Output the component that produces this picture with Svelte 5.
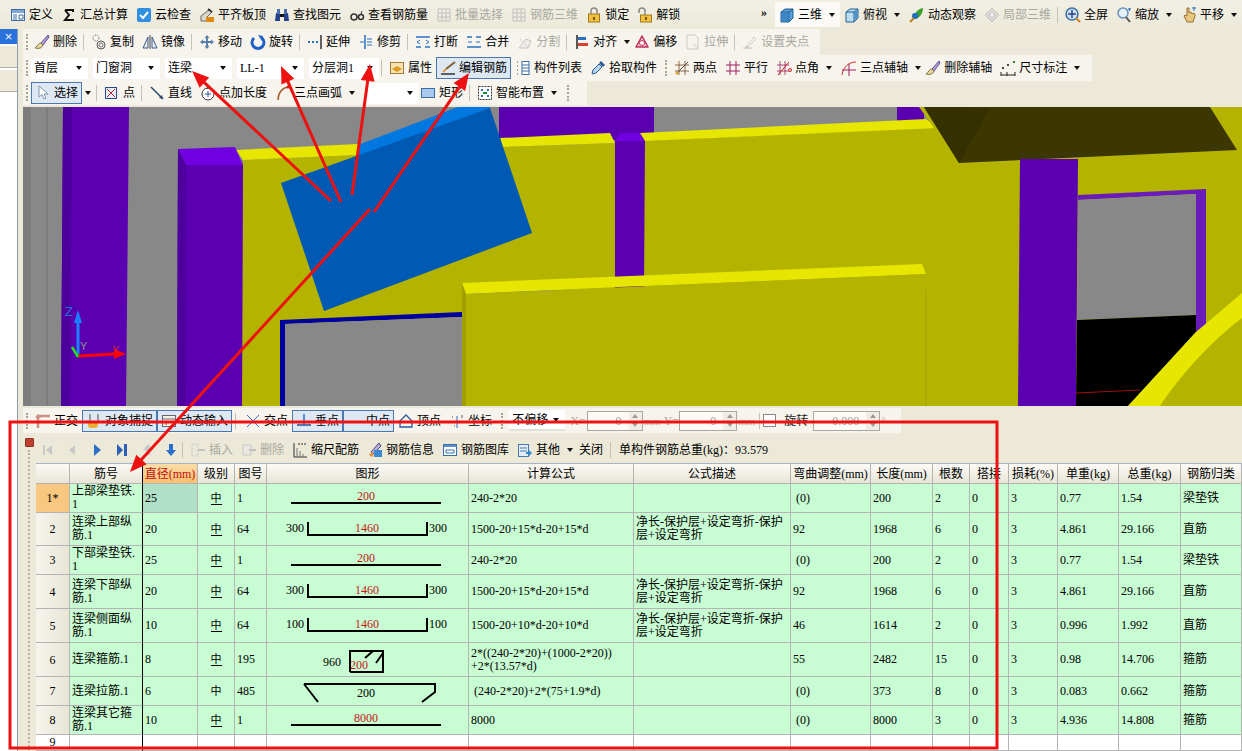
<script>
  // small 16x16 toolbar icons
  const I = {
    def: '<rect x="1.5" y="2.5" width="13" height="11" fill="#fff" stroke="#3a6ea5"/><rect x="2" y="3" width="12" height="3" fill="#7fa8d8"/><path d="M3 8h4M3 10h4M3 12h4M9 8h4v4H9z" stroke="#3a6ea5" fill="none"/>',
    sum: '<path d="M4 3h8v2M12 12v1H4l4-5-4-5" fill="none" stroke="#111" stroke-width="2"/>',
    cloud: '<rect x="1" y="1" width="14" height="14" rx="2" fill="#2f8fe0"/><path d="M4 8l3 3 5-6" fill="none" stroke="#fff" stroke-width="2"/>',
    level: '<path d="M2 14V9l8-6 3 2-5 5v4z" fill="#d9d9d0" stroke="#666"/><rect x="7" y="10" width="8" height="5" fill="#e08a10"/><path d="M9 2l4 3" stroke="#333" stroke-width="2"/>',
    find: '<path d="M2 6h4v8H1zM10 6h4l1 8h-5z" fill="#27408b"/><rect x="3" y="2" width="3" height="5" fill="#4a6ab0"/><rect x="10" y="2" width="3" height="5" fill="#4a6ab0"/><rect x="6" y="7" width="4" height="3" fill="#111"/>',
    glass: '<circle cx="5" cy="10" r="3" fill="none" stroke="#333" stroke-width="1.5"/><circle cx="12" cy="10" r="2.5" fill="none" stroke="#333" stroke-width="1.5"/><path d="M8 10h1.5M12 7l1-3" stroke="#333"/>',
    batch: '<path d="M2 2h12v12H2zM2 6h12M2 10h12M6 2v12M10 2v12" fill="none" stroke="#bbb"/>',
    lock: '<rect x="2.5" y="7" width="11" height="8" fill="#f0c040" stroke="#a07810"/><path d="M5 7V4a3 3 0 0 1 6 0v3" fill="none" stroke="#888" stroke-width="1.5"/><rect x="7" y="10" width="2" height="3" fill="#805000"/>',
    unlock: '<rect x="3.5" y="8" width="11" height="7" fill="#f0c040" stroke="#a07810"/><path d="M2 6V4a3 3 0 0 1 6 0v4" fill="none" stroke="#888" stroke-width="1.5"/><rect x="8" y="10" width="2" height="3" fill="#805000"/>',
    cube: '<path d="M2 5l4-3h8v9l-4 4H2z" fill="#5aa0d8" stroke="#1f5f90"/><path d="M2 5h8v10M10 5l4-3" fill="none" stroke="#1f5f90"/><path d="M2.5 5.500h7v9h-7z" fill="#3c86c4"/>',
    top: '<path d="M2 5l4-3h8v9l-4 4H2z" fill="#bcdcf0" stroke="#1f5f90"/><path d="M2 5h8v10M10 5l4-3" fill="none" stroke="#1f5f90"/><path d="M10.500 5.500l3-3v8l-3 3z" fill="#4a90c8"/>',
    orbit: '<path d="M3 14C4 8 8 2 14 1c0 6-4 11-9 11z" fill="#3aa030"/><circle cx="6" cy="9" r="3" fill="#1e6ec0"/><path d="M1 15l4-4" stroke="#c08020" stroke-width="2"/>',
    local: '<path d="M8 1l7 7-7 7-7-7z" fill="#d8d8d0" stroke="#bbb"/><path d="M5 8l3-3 3 3-3 3z" fill="#eee" stroke="#bbb"/>',
    full: '<circle cx="7" cy="7" r="6" fill="#cfe3f6" stroke="#3a6ea5" stroke-width="1.500"/><path d="M7 3v8M3 7h8" stroke="#27408b" stroke-width="1.500"/><path d="M11 11l4 4" stroke="#d08020" stroke-width="2"/>',
    zoom: '<circle cx="7" cy="6" r="5" fill="#e4f0fa" stroke="#6a90b8" stroke-width="1.500"/><path d="M10 10l4 5" stroke="#555" stroke-width="2"/><path d="M12 2h3M13.500 1v3" stroke="#2a70c0"/>',
    pan: '<path d="M3 9l3 6h6l2-6V7l-2-1-1 1V6l-2-1-1 1V1H6v8L4 8z" fill="#e8c880" stroke="#9a7030"/><path d="M11 1h4M13 0v4" stroke="#2a70c0"/>',
    brush: '<path d="M14 1L7 9l2 2 6-8z" fill="#b0a0d8" stroke="#604890"/><path d="M7 9c-3 0-3 3-6 5 4 1 7 0 8-3z" fill="#e8d8a0" stroke="#807040"/>',
    copy: '<circle cx="5" cy="4" r="3" fill="none" stroke="#777" stroke-dasharray="1.500 1"/><circle cx="10" cy="11" r="4" fill="none" stroke="#555"/><circle cx="10" cy="11" r="2" fill="none" stroke="#777"/>',
    mirror: '<path d="M8 1v14" stroke="#444"/><path d="M6 3v11H1zM10 3v11h5z" fill="#e8eef4" stroke="#3a5a88"/>',
    move: '<path d="M8 1l2.500 3H9v3h3V5.500L15 8l-3 2.500V9H9v3h1.500L8 15l-2.500-3H7V9H4v1.500L1 8l3-2.500V7h3V4H5.500z" fill="#5a80a8"/>',
    rotate: '<path d="M4 4a6 6 0 1 0 8 0" fill="none" stroke="#2060c8" stroke-width="3"/><path d="M8 1l5 1-1 5z" fill="#2060c8"/>',
    extend: '<path d="M1 8h2M5 8h2M9 8h2" stroke="#2a70c0" stroke-width="2"/><path d="M14 1v14" stroke="#333" stroke-width="1.500"/>',
    trim: '<path d="M7 1v14" stroke="#2a70c0" stroke-width="1.500"/><path d="M9 5h5M9 8h5M9 11h5M2 8h4" stroke="#2a70c0"/>',
    cut: '<path d="M1 13h5M10 13h5M1 3h14" stroke="#2a70c0" stroke-width="1.500"/><path d="M5 6L2 8l3 2M11 6l3 2-3 2" fill="none" stroke="#2a70c0"/>',
    merge: '<path d="M1 13h14M1 3h5M10 3h5" stroke="#2a70c0" stroke-width="1.500"/><path d="M2 8h4M10 8h4" stroke="#2a70c0"/>',
    split: '<path d="M2 14L9 5l5 2-3 7z" fill="#eee" stroke="#bbb"/><path d="M3 5l9 9" stroke="#ccc"/>',
    align: '<path d="M3 1v14" stroke="#222" stroke-width="1.500"/><path d="M4 3h8v3H4z" fill="#2a70c0"/><path d="M4 9h10v3H4z" fill="#d84030"/>',
    offset: '<path d="M2 13L8 2l6 11z" fill="#f8c8c8" stroke="#c03060" stroke-linejoin="round" stroke-width="1.500"/><circle cx="8" cy="9" r="2.500" fill="#fff" stroke="#c03060"/>',
    stretch: '<path d="M2 1h8l3 3v11H2z" fill="none" stroke="#c4c4c4"/><path d="M8 10l5 4" stroke="#ccc"/>',
    grip: '<path d="M3 14L12 3l2 2-8 8z" fill="none" stroke="#c8c8c8"/><path d="M1 14h3M7 14h3" stroke="#bbb"/><rect x="4.500" y="12" width="2" height="3" fill="#bbb"/>',
    attr: '<rect x="1.500" y="2.500" width="13" height="11" fill="#f4e2b0" stroke="#a07830"/><path d="M3 9l5-3 5 3-5 3z" fill="#e09a20"/>',
    edit: '<path d="M15 2L6 9" stroke="#806030" stroke-width="2"/><path d="M6 9l-3 3" stroke="#d8a040" stroke-width="2"/><path d="M1 14h14" stroke="#333" stroke-width="1.500"/>',
    list: '<path d="M2 2h2M2 6h2M2 10h2M2 14h2" stroke="#555" stroke-dasharray="1 1"/><rect x="7" y="1.500" width="7" height="13" fill="#fff" stroke="#3a6ea5"/><path d="M7 5h7M7 8h7M7 11h7" stroke="#3a6ea5"/>',
    pick: '<path d="M2 14l1-4 6-6 3 3-6 6z" fill="#b8d8f0" stroke="#2a5a90"/><path d="M9 3l2-2 4 4-2 2z" fill="#2a5a90"/>',
    two: '<path d="M5 1v14M11 1v14M1 5h14M1 11h14" stroke="#7a4a20" stroke-width=".8" fill="none"/><path d="M2 14L14 2" stroke="#555"/><circle cx="3" cy="13" r="1.500" fill="#d8a020"/>',
    par: '<path d="M5 1v14M11 1v14M1 5h14M1 11h14" stroke="#a02060"/>',
    ang: '<path d="M4 1v14M9 1v14M1 5h12M1 11h12" stroke="#a02060" stroke-width=".8"/><path d="M2 15L13 2" stroke="#c02020"/><circle cx="14" cy="10" r="1.500" fill="none" stroke="#d02020"/>',
    arc3: '<path d="M1 15C2 7 8 2 15 2" fill="none" stroke="#d03030"/><path d="M1 10h14M8 4v12" stroke="#a02060"/>',
    dim: '<path d="M1 15h14" stroke="#222"/><path d="M1 12v4M7 12v4M15 12v4" stroke="#222"/><rect x="2" y="7" width="2" height="2" fill="#444"/><rect x="7" y="4" width="2" height="2" fill="#444"/><rect x="13" y="1" width="2" height="2" fill="#2a8030"/>',
    cursor: '<path d="M4 1v11l3-2.500 2 4.500 2-1-2-4h4z" fill="#fff" stroke="#8098b0"/>',
    point: '<rect x="1.500" y="2.500" width="11" height="11" fill="#e8eef8" stroke="#2a4a90"/><path d="M3 4l8 8M11 4l-8 8" stroke="#c02020"/>',
    line: '<path d="M2 2l12 12" stroke="#2a4a70" stroke-width="1.500"/><path d="M14 14l-4-1 3-3z" fill="#2a4a70"/>',
    plus: '<circle cx="8" cy="9" r="6" fill="#fff" stroke="#333"/><path d="M8 6v6M5 9h6" stroke="#2a5aa0"/><path d="M8 0l-1 4" stroke="#333"/>',
    arc: '<path d="M3 15C3 8 7 3 13 2" fill="none" stroke="#a06030" stroke-width="1.500"/><circle cx="13" cy="2" r="1.500" fill="#d02020"/>',
    rect: '<rect x="1.500" y="3.500" width="13" height="9" fill="#a8c8f0" stroke="#3a6ea5"/>',
    smart: '<rect x="1.500" y="1.500" width="13" height="13" fill="#fff" stroke="#333" stroke-dasharray="2 1"/><path d="M4 4h2v2H4zM10 4h2v2h-2zM4 10h2v2H4zM10 10h2v2h-2z" fill="#2a70c0"/><path d="M6 8h4" stroke="#2a8030" stroke-width="2"/>',
    ortho: '<path d="M3 15V3h12" fill="none" stroke="#c89088" stroke-width="2.500"/><path d="M3 1L0 5h6z" fill="#c89088"/>',
    snap: '<path d="M4 1v9M12 1v9" stroke="#555"/><rect x="2" y="8" width="10" height="7" rx="3" fill="#e8b030"/>',
    dyn: '<rect x="1.500" y="2.500" width="13" height="11" fill="#f4f0e4" stroke="#667"/><path d="M2 6h12" stroke="#667"/><path d="M5 9v3" stroke="#c02020"/>',
    cross: '<path d="M2 2l12 12M14 2L2 14" stroke="#3a70c0"/>',
    perp: '<path d="M1 12h14" stroke="#2a4a90" stroke-width="1.500"/><path d="M8 1v11" stroke="#2a70c0" stroke-width="1.500"/>',
    mid: '<path d="M5 9h5" stroke="#2a4a90" stroke-width="1.500"/>',
    vertex: '<path d="M2 8l6-6 6 6v6H2z" fill="none" stroke="#2a5aa0" stroke-width="1.300"/>',
    coord: '<path d="M1 9h14M8 3v12" stroke="#2a70c0"/><path d="M3 4h1M13 2v3M5 13h1" stroke="#555"/>',
    ins: '<path d="M2 2h6v12H2z" fill="none" stroke="#c4c4c4" stroke-dasharray="2 1"/><path d="M8 8h7" stroke="#bbb" stroke-width="2"/>',
    del: '<path d="M2 3h8v10H2z" fill="#e8e8e4" stroke="#c4c4c4"/><path d="M8 8h7" stroke="#bbb" stroke-width="2"/>',
    scale: '<path d="M2 1v14h13" fill="none" stroke="#333"/><path d="M5 15V6M8 15V9M11 15v-3" stroke="#777"/><path d="M6 2h8" stroke="#333" stroke-dasharray="2 1"/>',
    info: '<path d="M12 1L4 10l2 2 8-8z" fill="#b8b0d8" stroke="#504080"/><rect x="7" y="8" width="8" height="7" fill="#3a8ad0"/><path d="M2 13l3-3 2 2-2 3z" fill="#e09040"/>',
    lib: '<rect x="1.500" y="2.500" width="13" height="11" fill="#fff" stroke="#3a6ea5"/><rect x="2" y="3" width="12" height="2" fill="#5a90d0"/><path d="M4 8h8v3H4z" fill="none" stroke="#3a6ea5"/>',
    other: '<rect x="1.500" y="2.500" width="10" height="12" fill="#e4eef8" stroke="#4a78b0"/><path d="M3 6h7M3 9h7" stroke="#4a78b0"/><path d="M9 10h3V8l3 3-3 3v-2H9z" fill="#2a90d0"/>'
  }

  const menu = [
    { i: 'def', t: '定义' }, { i: 'sum', t: '汇总计算' }, { i: 'cloud', t: '云检查' }, { i: 'level', t: '平齐板顶' },
    { i: 'find', t: '查找图元' }, { i: 'glass', t: '查看钢筋量' }, { i: 'batch', t: '批量选择', off: true },
    { i: 'batch', t: '钢筋三维', off: true }, { i: 'lock', t: '锁定' }, { i: 'unlock', t: '解锁' }
  ]
  const view = [
    { i: 'cube', t: '三维', caret: true, lit: true }, { i: 'top', t: '俯视', caret: true }, { i: 'orbit', t: '动态观察' },
    { i: 'local', t: '局部三维', off: true }, '|', { i: 'full', t: '全屏' }, { i: 'zoom', t: '缩放', caret: true }, { i: 'pan', t: '平移', caret: true }
  ]
  const edit = [
    { i: 'brush', t: '删除' }, '|', { i: 'copy', t: '复制' }, { i: 'mirror', t: '镜像' }, '|', { i: 'move', t: '移动' }, { i: 'rotate', t: '旋转' }, '|',
    { i: 'extend', t: '延伸' }, { i: 'trim', t: '修剪' }, '|', { i: 'cut', t: '打断' }, { i: 'merge', t: '合并' }, { i: 'split', t: '分割', off: true }, '|',
    { i: 'align', t: '对齐', caret: true, pull: true }, { i: 'offset', t: '偏移' }, { i: 'stretch', t: '拉伸', off: true }, '|', { i: 'grip', t: '设置夹点', off: true }
  ]
  const combos = [
    { t: '首层', w: 'w57' }, { t: '门窗洞', w: 'w67' }, { t: '连梁', w: 'w67' }, { t: 'LL-1', w: 'w67' }, { t: '分层洞1', w: 'w70' }
  ]
  const comp = [
    '|', { i: 'attr', t: '属性' }, { i: 'edit', t: '编辑钢筋', on: true }, { i: 'list', t: '构件列表' }, { i: 'pick', t: '拾取构件' }, ':',
    { i: 'two', t: '两点' }, { i: 'par', t: '平行' }, { i: 'ang', t: '点角', caret: true }, { i: 'arc3', t: '三点辅轴', caret: true, pull: true },
    { i: 'brush', t: '删除辅轴' }, { i: 'dim', t: '尺寸标注', caret: true }
  ]
  const draw1 = [
    { i: 'cursor', t: '选择', on: true, caret: true }, '|', { i: 'point', t: '点' }, '|', { i: 'line', t: '直线' }, { i: 'plus', t: '点加长度' },
    { i: 'arc', t: '三点画弧', caret: true }
  ]
  const draw2 = [{ i: 'rect', t: '矩形' }, '|', { i: 'smart', t: '智能布置', caret: true }]
  const snaps = [
    { i: 'ortho', t: '正交' }, { i: 'snap', t: '对象捕捉', on: true }, { i: 'dyn', t: '动态输入', on: true }, '|', { i: 'cross', t: '交点' },
    { i: 'perp', t: '垂点', on: true }, { i: 'mid', t: '中点', on: true }, { i: 'vertex', t: '顶点' }, { i: 'coord', t: '坐标' }
  ]
  const rebarTools = [
    { i: 'ins', t: '插入', off: true }, { i: 'del', t: '删除', off: true }, { i: 'scale', t: '缩尺配筋' }, { i: 'info', t: '钢筋信息' },
    { i: 'lib', t: '钢筋图库' }, { i: 'other', t: '其他', caret: true }
  ]

  const cols = ['筋号', '直径(mm)', '级别', '图号', '图形', '计算公式', '公式描述', '弯曲调整(mm)', '长度(mm)', '根数', '搭接', '损耗(%)', '单重(kg)', '总重(kg)', '钢筋归类']
  const desc = '净长-保护层+设定弯折-保护\n层+设定弯折'
  const rows = [
    { h: 29, id: '1*', name: '上部梁垫铁.\n1', d: '25', g: 2, no: '1', fig: 'line', v: '200', f: '240-2*20', ds: '', bend: ' (0)', len: '200', n: '2', u: '0.77', tot: '1.54', cat: '梁垫铁' },
    { h: 33, id: '2', name: '连梁上部纵\n筋.1', d: '20', g: 2, no: '64', fig: 'u', v: '1460', e: '300', f: '1500-20+15*d-20+15*d', ds: desc, bend: '92', len: '1968', n: '6', u: '4.861', tot: '29.166', cat: '直筋' },
    { h: 29, id: '3', name: '下部梁垫铁.\n1', d: '25', g: 2, no: '1', fig: 'line', v: '200', f: '240-2*20', ds: '', bend: ' (0)', len: '200', n: '2', u: '0.77', tot: '1.54', cat: '梁垫铁' },
    { h: 34, id: '4', name: '连梁下部纵\n筋.1', d: '20', g: 2, no: '64', fig: 'u', v: '1460', e: '300', f: '1500-20+15*d-20+15*d', ds: desc, bend: '92', len: '1968', n: '6', u: '4.861', tot: '29.166', cat: '直筋' },
    { h: 34, id: '5', name: '连梁侧面纵\n筋.1', d: '10', g: 2, no: '64', fig: 'u', v: '1460', e: '100', f: '1500-20+10*d-20+10*d', ds: desc, bend: '46', len: '1614', n: '2', u: '0.996', tot: '1.992', cat: '直筋' },
    { h: 34, id: '6', name: '连梁箍筋.1', d: '8', g: 2, no: '195', fig: 'box', f: '2*((240-2*20)+(1000-2*20))\n+2*(13.57*d)', ds: '', bend: '55', len: '2482', n: '15', u: '0.98', tot: '14.706', cat: '箍筋' },
    { h: 29, id: '7', name: '连梁拉筋.1', d: '6', g: 1, no: '485', fig: 'tie', f: ' (240-2*20)+2*(75+1.9*d)', ds: '', bend: ' (0)', len: '373', n: '8', u: '0.083', tot: '0.662', cat: '箍筋' },
    { h: 29, id: '8', name: '连梁其它箍\n筋.1', d: '10', g: 2, no: '1', fig: 'line', v: '8000', f: '8000', ds: '', bend: ' (0)', len: '8000', n: '3', u: '4.936', tot: '14.808', cat: '箍筋' }
  ]

  // red callout arrows: from the block in the viewport up to the toolbar, and down to the table
  const arrows = [
    [331, 201, 192, 71], [341, 202, 281, 66], [352, 195, 370, 64], [374, 212, 469, 73], [370, 209, 130, 472]
  ]
  function head(a) {
    const [x1, y1, x2, y2] = a
    const len = Math.hypot(x2 - x1, y2 - y1)
    const ux = (x2 - x1) / len, uy = (y2 - y1) / len
    const bx = x2 - ux * 17, by = y2 - uy * 17
    return `${x2},${y2} ${bx - uy * 7},${by + ux * 7} ${bx + uy * 7},${by - ux * 7}`
  }
  function stem(a) {
    const [x1, y1, x2, y2] = a
    const len = Math.hypot(x2 - x1, y2 - y1)
    return { x: x2 - ((x2 - x1) / len) * 14, y: y2 - ((y2 - y1) / len) * 14 }
  }
</script>

{#snippet icon(name)}
  <svg class="ico" viewBox="0 0 16 16" width="16" height="16">{@html I[name]}</svg>
{/snippet}

{#snippet caret()}
  <span class="caret"></span>
{/snippet}

{#snippet tools(list)}
  {#each list as it}
    {#if it === '|'}
      <span class="sep"></span>
    {:else if it === ':'}
      <span class="grip mid"></span>
    {:else}
      <span class="tool" class:off={it.off} class:on={it.on} class:lit={it.lit} class:pull={it.pull}>
        {@render icon(it.i)}<span>{it.t}</span>
        {#if it.caret && !it.on}{@render caret()}{/if}
      </span>
      {#if it.caret && it.on}<span class="after">{@render caret()}</span>{/if}
    {/if}
  {/each}
{/snippet}

{#snippet spin(val, cls)}
  <span class="spin {cls}"><span class="val">{val}</span><span class="arrows"><i class="up"></i><i class="dn"></i></span></span>
{/snippet}

{#snippet figure(r)}
  <svg class="fig" width="201" height={r.h - 1}>
    {#if r.fig === 'line'}
      <line x1="24" x2="174" y1="19" y2="19" />
      <text class="red" x="99" y="16">{r.v}</text>
    {:else if r.fig === 'u'}
      <path d="M41 9V22H160V9" />
      <text x="28" y="19">{r.e}</text>
      <text x="171" y="19">{r.e}</text>
      <text class="red" x="100" y="19">{r.v}</text>
    {:else if r.fig === 'box'}
      <path d="M83 29V8H116V29H83M98 15L106 8M109 20L116 10" />
      <text x="65" y="23">960</text>
      <text class="red" x="92" y="26">200</text>
    {:else}
      <path d="M37 7H168V15L155 25M37 7L51 25" />
      <text x="99" y="20">200</text>
    {/if}
  </svg>
{/snippet}

<div class="app">
  <div class="menu">
    {@render tools(menu)}
    <span class="more">»</span>
    <div class="viewtools">{@render tools(view)}<span class="cutoff">{@render icon('def')}</span></div>
  </div>

  <div class="body">
    <aside>
      <div class="dockhead">×</div>
      <div class="docktab"></div>
      <div class="docktab"></div>
    </aside>

    <main>
      <div class="bar edit">
        <span class="grip"></span>
        {@render tools(edit)}
      </div>

      <div class="bar comp">
        <span class="grip"></span>
        <div class="combos">
          {#each combos as c}
            <span class="combo {c.w}"><span>{c.t}</span>{@render caret()}</span>
          {/each}
        </div>
        {@render tools(comp)}
      </div>

      <div class="bar draw">
        <span class="grip"></span>
        {@render tools(draw1)}
        <span class="combo w53 blank-combo">{@render caret()}</span>
        {@render tools(draw2)}
        <span class="grip mid"></span>
      </div>

      <!-- 3D scene: shapes sit at their picture coordinates -->
      <svg class="scene" viewBox="23 107 1219 299" width="1219" height="299">
        <rect x="23" y="107" width="1219" height="299" fill="#888888" />
        <rect x="23" y="107" width="8" height="299" fill="#7c7c7c" />
        <rect x="46" y="107" width="2" height="299" fill="#7c7c7c" />

        <path d="M63 107H129L126 406H61Z" fill="#5a00b0" />
        <path d="M63 107H72L70 406H61Z" fill="#4e009c" />

        <path d="M499 107H654V140H499Z" fill="#5a00b0" />
        <path d="M654 107H897V130H654Z" fill="#888888" />
        <path d="M897 107H924V122H897Z" fill="#5a00b0" />

        <path d="M243 160L358 155L502 147L615 143V290H466V406H242Z" fill="#b4b400" />
        <path d="M236 150L358 144V155L243 160Z" fill="#e6e600" />
        <path d="M500 138L610 133L615 143L502 147Z" fill="#e6e600" />

        <path d="M178 149L235 147L243 165L186 165Z" fill="#7000e0" />
        <path d="M186 165H243L242 406H177L178 149Z" fill="#5a00b0" />
        <path d="M178 149L186 165L185 406H177Z" fill="#4e009c" />

        <path d="M644 141L937 127L1020 158V406H644Z" fill="#b4b400" />
        <path d="M615 140H645L644 290H615Z" fill="#5a00b0" />
        <path d="M620 133H640L644 141H615Z" fill="#7000e0" />
        <path d="M640 133L926 119L938 128L645 141Z" fill="#e6e600" />

        <path d="M919 107H1242V406H1018V162L959 163Z" fill="#b4b400" />
        <path d="M924 107L959 163L1237 150L1210 107Z" fill="#3c3600" />
        <path d="M924 107L959 163L990 108Z" fill="#353000" />
        <path d="M1020 159H1078L1076 406H1018Z" fill="#5a00b0" />

        <path d="M1078 195L1206 189V330L1196 340V194L1078 200Z" fill="#6a1cb8" />
        <path d="M1078 200L1196 194V315L1077 320Z" fill="#888888" />
        <path d="M1077 320L1196 315V332L1128 406H1076Z" fill="#000" />
        <path d="M1076 393L1140 390" stroke="#a01010" stroke-width="1" />
        <path d="M1242 293L1196 332L1128 406H1160C1176 382 1205 346 1242 318Z" fill="#e6e600" />

        <path d="M280 320L462 312V317L285 324V406H280Z" fill="#0000a0" />
        <path d="M285 324L462 317V406H285Z" fill="#888888" />

        <path d="M462 283L922 264L926 274L620 287L466 294Z" fill="#e6e600" />
        <path d="M466 294L926 274V406H466Z" fill="#b4b400" />
        <path d="M462 283L466 294V406H462Z" fill="#a0a000" />
        <path d="M926 290V406" stroke="#a0a000" />

        <path d="M358 145L458 107H490V109L358 156Z" fill="#0078e0" />
        <path d="M281 183L490 108L532 233L324 311Z" fill="#005ab4" />

        <line x1="78" y1="357" x2="78" y2="322" stroke="#1a80ff" stroke-width="3" />
        <path d="M78 310L82 323H74Z" fill="#1a80ff" />
        <line x1="78" y1="356" x2="115" y2="354" stroke="#ff0000" stroke-width="3" />
        <path d="M126 354L114 349V359Z" fill="#ff0000" />
        <path d="M78 357L72 347" stroke="#20e020" stroke-width="2.500" />
        <text class="axis z" x="65" y="316">Z</text>
        <text class="axis y" x="80" y="350">Y</text>
        <text class="axis x" x="112" y="354">X</text>
      </svg>

      <div class="bar snap">
        <span class="grip"></span>
        {@render tools(snaps)}
        <span class="grip mid"></span>
        <span class="combo w56 flat"><span>不偏移</span>{@render caret()}</span>
        <span class="dim lbl-x">X=</span>
        {@render spin('0', 'w56')}
        <span class="dim">mm</span>
        <span class="dim lbl-y">Y=</span>
        {@render spin('0', 'w58')}
        <span class="dim">mm</span>
        <span class="sep"></span>
        <span class="check"></span>
        <span class="rot">旋转</span>
        {@render spin('0.000', 'w67')}
        <span class="dim">°</span>
      </div>

      <section class="panel">
        <div class="gutter">
          <span class="close"></span>
          <span class="dots"></span>
        </div>
        <div class="content">
          <div class="rebarbar">
            <svg class="nav" width="134" height="14" viewBox="0 0 134 14">
              <path d="M1 2v10h2V2zM10 2L4 7l6 5z" fill="#c8c8c8" />
              <path d="M33 2l-6 5 6 5z" fill="#c8c8c8" />
              <path d="M52 1l7 6-7 6z" fill="#2a70c8" />
              <path d="M75 1l6 6-6 6zM82 1h3v12h-3z" fill="#2a60b8" />
              <path d="M104 12V7h-3l5-6 5 6h-3v5z" fill="#c8c8c8" />
              <path d="M127 1v6h-3l5 6 5-6h-3V1z" fill="#2a70c8" />
            </svg>
            <span class="sep"></span>
            {@render tools(rebarTools)}
            <span class="tool plain"><span>关闭</span></span>
            <span class="sep"></span>
            <span class="total">单构件钢筋总重(kg)：93.579</span>
          </div>

          <table>
            <colgroup>
              <col class="c34" /><col class="c73" /><col class="c55" /><col class="c37" /><col class="c32" /><col class="c202" /><col class="c165" /><col class="c157" />
              <col class="c80" /><col class="c62" /><col class="c37" /><col class="c39" /><col class="c49" /><col class="c61" /><col class="c62" /><col class="c61" />
            </colgroup>
            <thead>
              <tr>
                <th></th>
                {#each cols as c, i}
                  <th class:hot={i === 1} class:frozen={i === 0}>{c}</th>
                {/each}
              </tr>
            </thead>
            <tbody>
              {#each rows as r, i}
                <tr class="data" style="height:{r.h}px">
                  <td class="rowno" class:cur={i === 0}>{r.id}</td>
                  <td class="frozen">{r.name}</td>
                  <td class:sel={i === 0}>{r.d}</td>
                  <td class="mid"><span class="grade" class:grade2={r.g === 2}>中</span></td>
                  <td>{r.no}</td>
                  <td class="figcell">{@render figure(r)}</td>
                  <td>{r.f}</td>
                  <td>{r.ds}</td>
                  <td>{r.bend}</td>
                  <td>{r.len}</td>
                  <td>{r.n}</td>
                  <td>0</td>
                  <td>3</td>
                  <td>{r.u}</td>
                  <td>{r.tot}</td>
                  <td>{r.cat}</td>
                </tr>
              {/each}
              <tr class="blank">
                <td class="rowno">9</td>
                <td class="frozen"></td>
                {#each { length: 14 } as _}<td></td>{/each}
              </tr>
            </tbody>
          </table>
        </div>
      </section>
    </main>
  </div>

  <!-- red annotations drawn over the screenshot -->
  <svg class="marks" width="1242" height="751">
    {#each arrows as a}
      <line x1={a[0]} y1={a[1]} x2={stem(a).x} y2={stem(a).y} stroke="#ee1111" stroke-width="3" />
      <polygon points={head(a)} fill="#ee1111" />
    {/each}
    <rect x="10" y="422" width="987" height="326" fill="none" stroke="#ee1111" stroke-width="3" />
  </svg>
</div>

<style>
  :global(body) {
    margin: 0;
  }

  .app {
    position: relative;
    width: 1242px;
    height: 751px;
    overflow: hidden;
    background: #ece9d8;
    color: #000;
    font: 12px/14px "Liberation Serif", "Noto Sans CJK SC", serif;
  }

  .menu {
    display: flex;
    align-items: center;
    height: 29px;
    padding-left: 6px;
    background: linear-gradient(#f2f0e6, #ece9d8);
    white-space: nowrap;
  }
  .more {
    position: absolute;
    left: 761px;
    top: 5px;
    font-weight: bold;
  }
  .viewtools {
    position: absolute;
    left: 775px;
    top: 2px;
    height: 25px;
    display: flex;
    align-items: center;
  }
  .cutoff {
    margin-left: 2px;
    display: flex;
  }

  .body {
    display: flex;
    height: 722px;
  }
  aside {
    width: 17px;
    flex: none;
    background: #fff;
    border-right: 1px solid #8a9cb4;
  }
  .dockhead {
    height: 15px;
    background: #2a72dc;
    color: #fff;
    text-align: center;
    font: 13px/15px "Liberation Sans", sans-serif;
  }
  .docktab {
    height: 21px;
    margin-top: 2px;
    background: #ece9d8;
    border-bottom: 1px solid #b0b0a8;
  }
  main {
    flex: 1;
    min-width: 0;
    padding-left: 5px;
  }

  .bar {
    display: flex;
    align-items: center;
    white-space: nowrap;
    width: max-content;
    background: #f6f4ec;
  }
  .bar.edit {
    height: 26px;
    padding-right: 7px;
  }
  .bar.edit > .grip {
    margin-right: 2px;
  }
  .bar.comp {
    height: 26px;
    padding-right: 7px;
  }
  .bar.comp .grip.mid {
    margin: 0 3px 0 4px;
  }
  .bar.draw {
    height: 24px;
    padding-right: 12px;
    margin-bottom: 2px;
  }
  .bar.snap {
    height: 25px;
    margin-top: 2px;
    padding-right: 14px;
  }
  .bar.snap .sep {
    margin: 0 3px 0 3px;
  }
  .bar.snap .sep + .tool {
    margin-left: 2px;
  }

  .grip {
    flex: none;
    width: 0;
    height: 16px;
    margin: 0 3px;
    border-left: 2px dotted #a8a490;
  }
  .grip.mid {
    margin: 0 6px 0 5px;
  }
  .sep {
    flex: none;
    width: 1px;
    height: 16px;
    margin: 0 3px 0 2px;
    background: #c4c2b4;
  }

  .tool {
    display: inline-flex;
    align-items: center;
    gap: 3px;
    height: 22px;
    padding: 0 4px;
    flex: none;
  }
  .tool.pull {
    margin-right: -5px;
  }
  .tool.on {
    padding: 0 3px;
    border: 1px solid #4a78b0;
    background: #dde8f4;
    box-sizing: border-box;
  }
  .tool.lit {
    background: #fbfaf6;
    height: 25px;
  }
  .tool.off {
    color: #a8a8a0;
  }
  .tool.off .ico {
    opacity: 0.85;
  }
  .tool.plain {
    padding: 0 5px 0 1px;
  }
  .ico {
    flex: none;
    display: block;
  }
  .caret {
    flex: none;
    width: 0;
    height: 0;
    margin-left: 4px;
    margin-right: 1px;
    border: 3px solid transparent;
    border-top: 4px solid #111;
    border-bottom: 0;
  }
  .after {
    display: inline-flex;
    margin: 0 2px 0 -1px;
  }

  .combos {
    display: flex;
    gap: 5px;
  }
  .combo {
    flex: none;
    display: inline-flex;
    align-items: center;
    justify-content: space-between;
    height: 21px;
    padding: 0 5px 0 3px;
    background: #fff;
    box-sizing: border-box;
  }
  .combo.blank-combo {
    justify-content: flex-end;
    margin: 0 -3px 0 6px;
  }
  .combo.flat {
    margin-right: 5px;
    border-bottom: 2px solid #e4e2d8;
  }
  .w53 { width: 53px; }
  .w56 { width: 56px; }
  .w57 { width: 57px; }
  .w58 { width: 58px; }
  .w67 { width: 67px; }
  .w70 { width: 70px; }

  .dim {
    color: #b0aea4;
    margin: 0 1px;
    font-size: 11px;
  }
  .lbl-x {
    margin: 0 1px 0 0;
    font-size: 12px;
  }
  .lbl-y {
    margin: 0 0 0 2px;
    font-size: 12px;
  }
  .spin {
    flex: none;
    display: inline-flex;
    align-items: stretch;
    height: 20px;
    background: #fbfaf6;
    border: 1px solid #a8a8a0;
    box-sizing: border-box;
    color: #a0a0a0;
  }
  .val {
    flex: 1;
    text-align: right;
    line-height: 18px;
    padding-right: 7px;
  }
  .arrows {
    width: 13px;
    display: flex;
    flex-direction: column;
    justify-content: space-around;
    align-items: center;
    background: #f0eee4;
  }
  .arrows i {
    width: 0;
    height: 0;
    border: 3px solid transparent;
  }
  .arrows .up {
    border-bottom: 4px solid #999;
    border-top: 0;
  }
  .arrows .dn {
    border-top: 4px solid #999;
    border-bottom: 0;
  }
  .check {
    flex: none;
    width: 11px;
    height: 11px;
    margin-right: 8px;
    border: 1px solid #888;
    background: #fff;
  }
  .rot {
    margin-right: 5px;
    color: #222;
  }

  .scene {
    display: block;
  }
  .axis {
    font: 13px "Liberation Sans", sans-serif;
  }
  .axis.z { fill: #2a70e0; }
  .axis.y { fill: #909090; font-size: 11px; }
  .axis.x { fill: #e02020; font-size: 11px; }

  .panel {
    display: flex;
    margin-top: 3px;
    height: 314px;
  }
  .gutter {
    position: relative;
    width: 13px;
    flex: none;
  }
  .close {
    position: absolute;
    left: 2px;
    top: 2px;
    width: 7px;
    height: 7px;
    border-radius: 1px;
    background: #c04030;
    border: 1px solid #903020;
  }
  .dots {
    position: absolute;
    left: 5px;
    top: 14px;
    bottom: 0;
    border-left: 2px dotted #b8b49c;
  }
  .content {
    flex: 1;
    min-width: 0;
  }
  .rebarbar {
    display: flex;
    align-items: center;
    height: 27px;
    white-space: nowrap;
  }
  .nav {
    flex: none;
    margin: 0 4px 0 6px;
  }
  .total {
    margin-left: 5px;
  }

  table {
    table-layout: fixed;
    width: 1206px;
    border-collapse: separate;
    border-spacing: 0;
    border-top: 1px solid #a8b4c4;
  }
  .c34 { width: 34px; }
  .c73 { width: 73px; }
  .c55 { width: 55px; }
  .c37 { width: 37px; }
  .c32 { width: 32px; }
  .c202 { width: 202px; }
  .c165 { width: 165px; }
  .c157 { width: 157px; }
  .c80 { width: 80px; }
  .c62 { width: 62px; }
  .c39 { width: 39px; }
  .c49 { width: 49px; }
  .c61 { width: 61px; }

  th, td {
    padding: 0 0 0 2px;
    border-right: 1px solid #b4b4b4;
    border-bottom: 1px solid #b4b4b4;
    box-sizing: border-box;
    overflow: hidden;
    white-space: pre-wrap;
    font-weight: normal;
  }
  th {
    height: 20px;
    padding: 0;
    text-align: center;
    background: linear-gradient(#fbfaf6, #e8e5d6);
    white-space: nowrap;
    line-height: 16px;
  }
  th.hot {
    background: linear-gradient(#fbdca8, #f8c070);
    color: #c01010;
  }
  tr.data td {
    background: #c8fcd2;
    line-height: 13px;
  }
  tr.data td.sel {
    background: #b0e0c8;
  }
  tr.blank td {
    height: 16px;
    background: #fff;
    vertical-align: top;
  }
  td.rowno, tr.data td.rowno {
    padding: 0;
    text-align: center;
    background: linear-gradient(90deg, #f6f4ec, #e8e5d6);
    line-height: 14px;
  }
  tr.data td.rowno.cur {
    background: #f8c880;
  }
  td.frozen, th.frozen {
    border-right: 1px solid #000;
  }
  td.mid {
    padding: 0;
    text-align: center;
  }
  .grade {
    font-size: 11px;
    display: inline-block;
    line-height: 11px;
  }
  .grade2 {
    border-bottom: 1px solid #000;
  }
  tr.data td.figcell {
    padding: 0;
    vertical-align: top;
  }
  .fig {
    display: block;
  }
  .fig line, .fig path {
    stroke: #000;
    stroke-width: 2;
    fill: none;
  }
  .fig text {
    font: 12px "Liberation Serif", serif;
    text-anchor: middle;
    fill: #000;
  }
  .fig text.red {
    fill: #c01818;
  }

  .marks {
    position: absolute;
    inset: 0;
    pointer-events: none;
  }
</style>
